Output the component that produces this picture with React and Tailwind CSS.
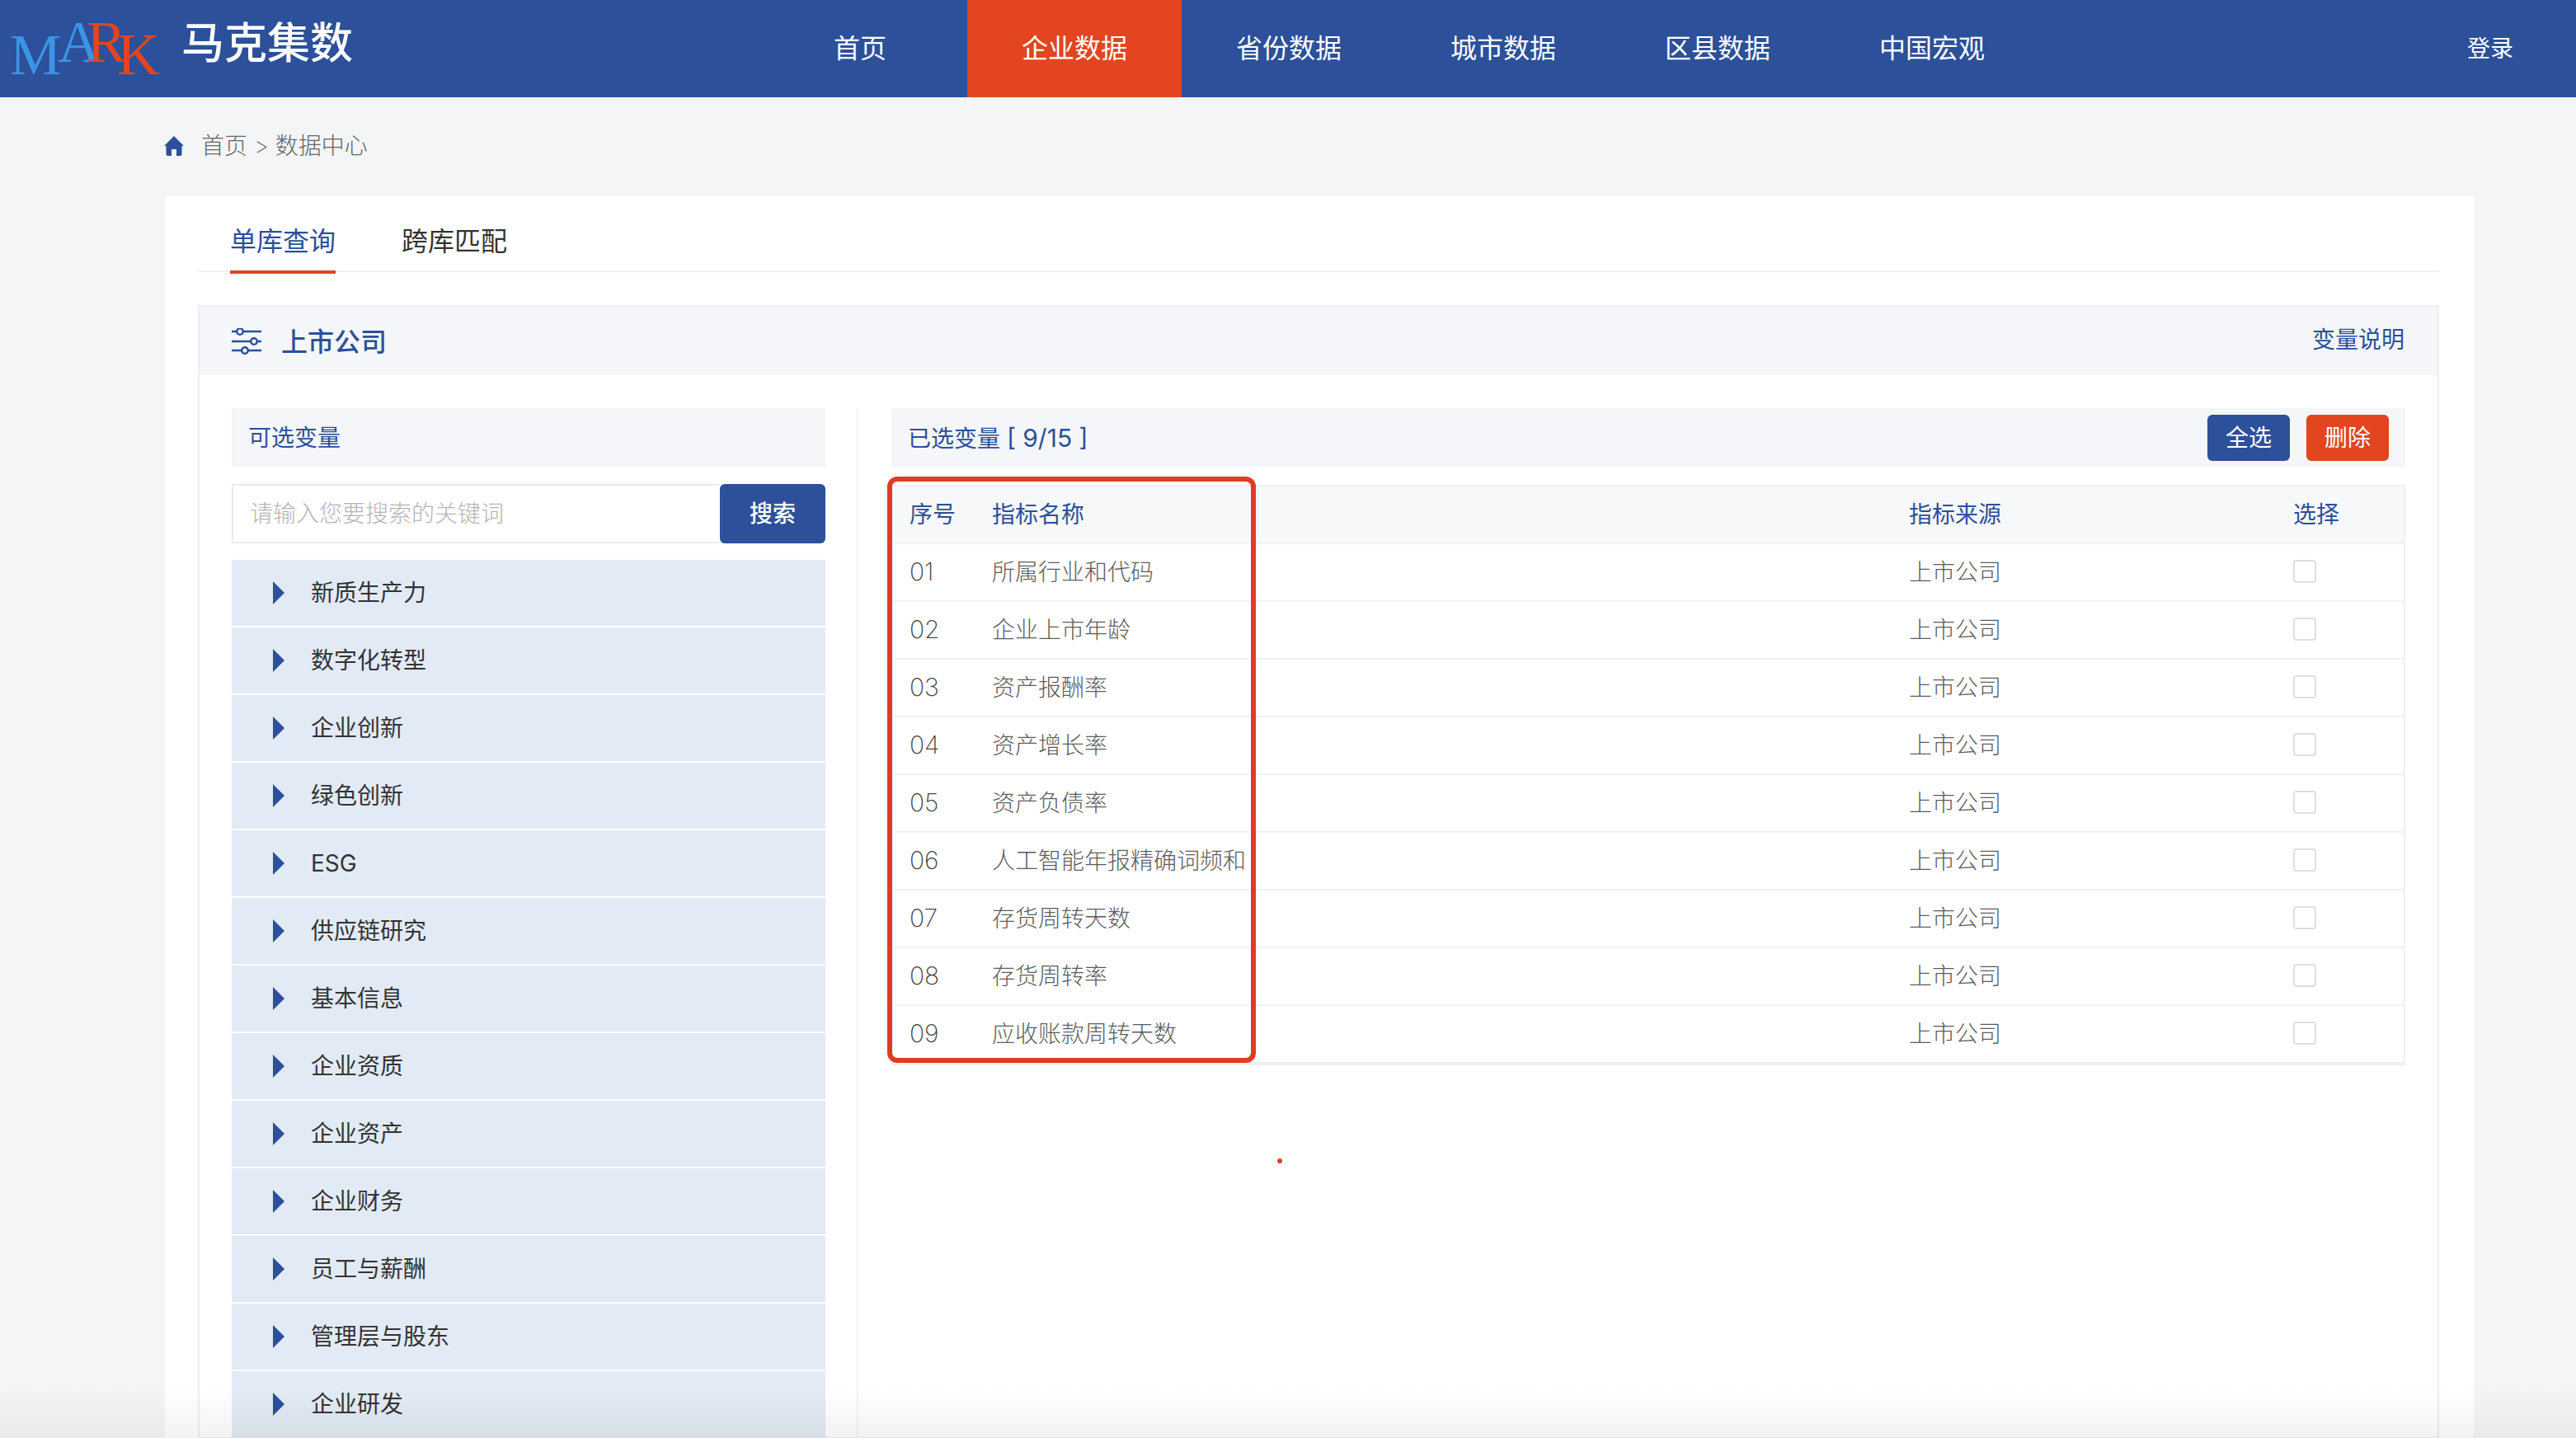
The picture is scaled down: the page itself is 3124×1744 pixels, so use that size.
const navItems = ['首页', '企业数据', '省份数据', '城市数据', '区县数据', '中国宏观']

const categories = [
  '新质生产力',
  '数字化转型',
  '企业创新',
  '绿色创新',
  'ESG',
  '供应链研究',
  '基本信息',
  '企业资质',
  '企业资产',
  '企业财务',
  '员工与薪酬',
  '管理层与股东',
  '企业研发',
]

const rows = [
  ['01', '所属行业和代码'],
  ['02', '企业上市年龄'],
  ['03', '资产报酬率'],
  ['04', '资产增长率'],
  ['05', '资产负债率'],
  ['06', '人工智能年报精确词频和'],
  ['07', '存货周转天数'],
  ['08', '存货周转率'],
  ['09', '应收账款周转天数'],
]

function Logo() {
  return (
    <svg width="200" height="118" viewBox="0 0 200 118" className="shrink-0">
      <g fontFamily="'Liberation Serif', serif">
        <text x="12" y="90" fontSize="70" fill="#3b94e6">M</text>
        <text x="70" y="75" fontSize="72" fill="#3b94e6">A</text>
        <text x="105" y="75" fontSize="72" fill="#e2451f">R</text>
        <text x="142" y="90" fontSize="72" fill="#e2451f">K</text>
      </g>
    </svg>
  )
}

function SlidersIcon() {
  return (
    <svg width="36" height="32" viewBox="0 0 36 32" fill="none" stroke="#2c5099" strokeWidth="2.5" className="shrink-0">
      <path d="M0 4h36M0 16h36M0 27h36" />
      <circle cx="10" cy="4" r="3.8" fill="#f4f6f9" />
      <circle cx="27" cy="16" r="3.8" fill="#f4f6f9" />
      <circle cx="16" cy="27" r="3.8" fill="#f4f6f9" />
    </svg>
  )
}

function HomeIcon() {
  return (
    <svg width="24" height="24" viewBox="0 0 24 24" fill="#2c5099" className="shrink-0">
      <path d="M12 0L24 12H21.5V22a2 2 0 0 1-2 2H15V16H9V24H4.5a2 2 0 0 1-2-2V12H0Z" />
    </svg>
  )
}

function SelectedTable() {
  return (
    <div className="mt-[21px] border-2 border-b-4 border-[#eef0f3]">
      <div className="flex h-[68px] items-center bg-[#f7f8fa] text-[#2c5099]">
        <div className="w-[120px] pl-5">序号</div>
        <div className="w-[1112px]">指标名称</div>
        <div className="w-[466px]">指标来源</div>
        <div>选择</div>
      </div>
      {rows.map((row) => (
        <div key={row[0]} className="flex h-[70px] items-center border-t-2 border-[#f0f1f4] font-extralight text-[#5c5c5c]">
          <div className="-mt-0.5 w-[120px] pl-5 text-[30px] text-[#444]">{row[0]}</div>
          <div className="w-[1112px]">{row[1]}</div>
          <div className="w-[466px]">上市公司</div>
          <div className="-mt-0.5 h-7 w-7 rounded border-2 border-[#dcdfe4]" />
        </div>
      ))}
    </div>
  )
}

export default function App() {
  return (
    <div className="relative h-[1744px] overflow-hidden bg-[#f4f5f7] font-[Inter,'Noto_Sans_CJK_SC',sans-serif] text-[28px]">
      <header className="flex h-[118px] items-center bg-[#2c5099] text-white">
        <div className="flex w-[913px] items-center">
          <Logo />
          <span className="mb-3 ml-5 text-[52px] font-medium">马克集数</span>
        </div>
        <nav className="flex h-full">
          {navItems.map((item) => (
            <a
              key={item}
              className={
                item === '企业数据'
                  ? 'flex w-[260px] items-center justify-center bg-[#e2451f] text-[32px]'
                  : 'flex w-[260px] items-center justify-center text-[32px]'
              }
            >
              {item}
            </a>
          ))}
        </nav>
        <a className="ml-auto mr-[76px]">登录</a>
      </header>

      <div className="flex h-[120px] items-center gap-[21px] pb-[3px] pl-[199px] font-extralight text-[#666]">
        <HomeIcon />
        <span>首页 &gt; 数据中心</span>
      </div>

      <main className="ml-[200px] w-[2800px] bg-white pb-10 pl-10 pr-[42px]">
        <div className="flex h-[92px] items-end gap-20 border-b-2 border-[#eceef3] pl-[39px] text-[32px]">
          <a className="-mb-1 h-[63px] border-b-4 border-[#e2451f] text-[#2c5099]">单库查询</a>
          <a className="h-[59px] text-[#333]">跨库匹配</a>
        </div>

        <section className="mt-10 border-2 border-[#eceef3]">
          <div className="flex h-[83px] items-center bg-[#f4f6f9] pl-[39px] pr-10">
            <SlidersIcon />
            <h2 className="ml-6 mt-0.5 text-[32px] font-medium text-[#2c5099]">上市公司</h2>
            <a className="mb-1 ml-auto text-[#2c5099]">变量说明</a>
          </div>

          <div className="flex px-[39px] pt-10">
            <div className="w-[720px] shrink-0">
              <div className="flex h-[72px] items-center bg-[#f4f6f9] pl-5 text-[#2c5099]">可选变量</div>
              <div className="mt-5 flex h-[72px]">
                <div className="flex flex-1 items-center border-2 border-r-0 border-[#e9ebef] pl-5 font-extralight text-[#b5b5b5]">
                  请输入您要搜索的关键词
                </div>
                <button className="w-32 rounded-md bg-[#2c5099] font-medium text-white">搜索</button>
              </div>
              <ul className="mt-5 flex flex-col gap-0.5">
                {categories.map((name) => (
                  <li key={name} className="flex h-20 shrink-0 items-center bg-[#e2eaf5] pl-[50px] text-[#333]">
                    <span className="h-0 w-0 border-y-[14px] border-l-[14px] border-y-transparent border-l-[#2c5099]" />
                    <span className="ml-8">{name}</span>
                  </li>
                ))}
              </ul>
            </div>

            <div className="ml-[38px] flex-1 border-l-2 border-[#f1f2f4] pl-10">
              <div className="flex h-[72px] items-center bg-[#f4f6f9] pl-5 pr-5 text-[#2c5099]">
                <span>
                  已选变量 <span className="text-[30px]">[ 9/15 ]</span>
                </span>
                <button className="ml-auto h-14 w-[100px] rounded-md bg-[#2c5099] text-white">全选</button>
                <button className="ml-5 h-14 w-[100px] rounded-md bg-[#e2451f] text-white">删除</button>
              </div>
              <SelectedTable />
            </div>
          </div>
        </section>
      </main>

      {/* annotation drawn on top of the table */}
      <div className="absolute left-[1076px] top-[578px] h-[711px] w-[447px] rounded-[12px] border-[6px] border-[#e23a25]" />
      <div className="absolute left-[1549px] top-[1405px] h-1.5 w-1.5 rounded-full bg-[#e23a25]" />
      <div className="absolute inset-x-0 bottom-0 h-[60px] bg-gradient-to-b from-transparent to-black/5" />
    </div>
  )
}
